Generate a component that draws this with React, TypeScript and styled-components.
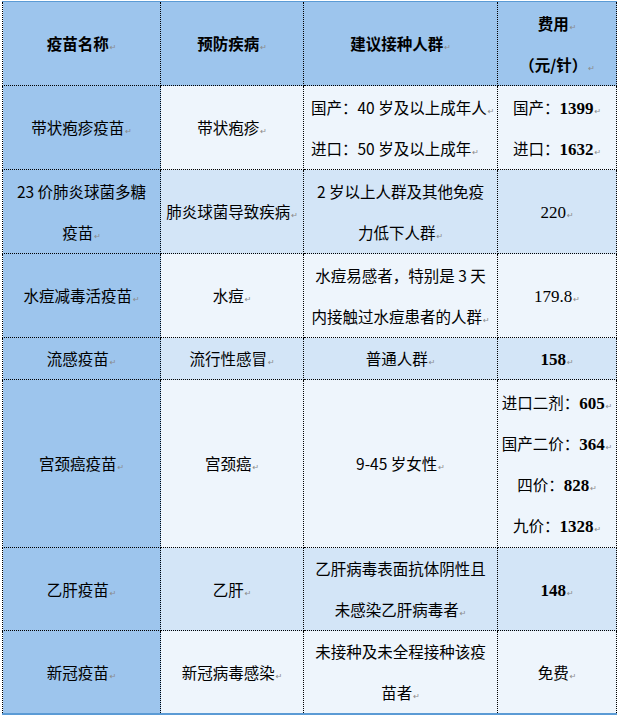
import React from "react";
import styled, { createGlobalStyle } from "styled-components";

const GlobalStyle = createGlobalStyle`
  html, body {
    margin: 0;
    padding: 0;
    background: #ffffff;
  }
  body {
    font-family: "Noto Sans CJK SC", "Liberation Sans", sans-serif;
  }
`;

const Page = styled.div`
  width: 617px;
  height: 715px;
  padding: 1px 0 0 2px;
  box-sizing: border-box;
  overflow: hidden;
`;

const Table = styled.table`
  width: 614px;
  border-collapse: collapse;
  table-layout: fixed;
  border-top: 1px solid #5b9bd5;
  border-bottom: 2px solid #5b9bd5;
`;

const Row = styled.tr<{ $h: number }>`
  height: ${(p) => p.$h}px;
`;

type Tone = "dark" | "mid" | "light";

const toneColor: Record<Tone, string> = {
  dark: "#9dc5ed",
  mid: "#d3e5f7",
  light: "#eef5fc",
};

const Cell = styled.td<{ $tone: Tone; $align?: "left" | "center" }>`
  background: ${(p) => toneColor[p.$tone]};
  border: 1px dotted #000000;
  padding: ${(p) => (p.$align === "left" ? "0 0 0 7px" : "0 1px")};
  text-align: ${(p) => p.$align || "center"};
  vertical-align: middle;
  color: #000000;
  font-size: 15.5px;
  overflow: visible;
`;

const HeadCell = styled(Cell)`
  font-weight: bold;
  border-top: none;
`;

const Line = styled.div`
  height: 41px;
  line-height: 41px;
  white-space: nowrap;
`;

const Mark = styled.span`
  font-family: "DejaVu Sans", sans-serif;
  font-size: 8px;
  line-height: 1;
  font-weight: normal;
  color: #8a8a8a;
  margin-left: 1px;
`;

const Num = styled.span<{ $bold?: boolean }>`
  font-family: "Liberation Serif", serif;
  font-size: 17px;
  line-height: 1;
  font-weight: ${(p) => (p.$bold ? "bold" : "normal")};
`;

type Price = { label?: string; num: string; bold?: boolean };

interface VaccineRow {
  h: number;
  name: string[];
  disease: string[];
  group: string[];
  groupAlign?: "left" | "center";
  price: Price[];
}

const rows: VaccineRow[] = [
  {
    h: 84,
    name: ["带状疱疹疫苗"],
    disease: ["带状疱疹"],
    group: ["国产：40 岁及以上成年人", "进口：50 岁及以上成年"],
    groupAlign: "left",
    price: [
      { label: "国产：", num: "1399", bold: true },
      { label: "进口：", num: "1632", bold: true },
    ],
  },
  {
    h: 84,
    name: ["23 价肺炎球菌多糖", "疫苗"],
    disease: ["肺炎球菌导致疾病"],
    group: ["2 岁以上人群及其他免疫", "力低下人群"],
    price: [{ num: "220" }],
  },
  {
    h: 84,
    name: ["水痘减毒活疫苗"],
    disease: ["水痘"],
    group: ["水痘易感者，特别是 3 天", "内接触过水痘患者的人群"],
    price: [{ num: "179.8" }],
  },
  {
    h: 42,
    name: ["流感疫苗"],
    disease: ["流行性感冒"],
    group: ["普通人群"],
    price: [{ num: "158", bold: true }],
  },
  {
    h: 168,
    name: ["宫颈癌疫苗"],
    disease: ["宫颈癌"],
    group: ["9-45 岁女性"],
    price: [
      { label: "进口二剂：", num: "605", bold: true },
      { label: "国产二价：", num: "364", bold: true },
      { label: "四价：", num: "828", bold: true },
      { label: "九价：", num: "1328", bold: true },
    ],
  },
  {
    h: 83,
    name: ["乙肝疫苗"],
    disease: ["乙肝"],
    group: ["乙肝病毒表面抗体阴性且", "未感染乙肝病毒者"],
    price: [{ num: "148", bold: true }],
  },
  {
    h: 83,
    name: ["新冠疫苗"],
    disease: ["新冠病毒感染"],
    group: ["未接种及未全程接种该疫", "苗者"],
    price: [{ label: "免费", num: "" }],
  },
];

// each paragraph ends with Word's pilcrow-like return mark
const Paragraphs: React.FC<{ lines: string[]; markEach?: boolean }> = ({
  lines,
  markEach,
}) => (
  <>
    {lines.map((text, i) => (
      <Line key={i}>
        {text}
        {(markEach || i === lines.length - 1) && <Mark>↵</Mark>}
      </Line>
    ))}
  </>
);

const PriceLines: React.FC<{ items: Price[] }> = ({ items }) => (
  <>
    {items.map((p, i) => (
      <Line key={i}>
        {p.label}
        {p.num && <Num $bold={p.bold}>{p.num}</Num>}
        <Mark>↵</Mark>
      </Line>
    ))}
  </>
);

const App: React.FC = () => {
  return (
    <Page>
      <GlobalStyle />
      <Table>
        <colgroup>
          <col style={{ width: 158 }} />
          <col style={{ width: 143 }} />
          <col style={{ width: 194 }} />
          <col style={{ width: 119 }} />
        </colgroup>
        <tbody>
          <Row $h={84}>
            <HeadCell $tone="dark">
              <Paragraphs lines={["疫苗名称"]} />
            </HeadCell>
            <HeadCell $tone="dark">
              <Paragraphs lines={["预防疾病"]} />
            </HeadCell>
            <HeadCell $tone="dark">
              <Paragraphs lines={["建议接种人群"]} />
            </HeadCell>
            <HeadCell $tone="dark">
              <Paragraphs lines={["费用", "（元/针）"]} markEach />
            </HeadCell>
          </Row>
          {rows.map((r, i) => {
            const tone: Tone = i % 2 === 0 ? "light" : "mid";
            return (
              <Row key={i} $h={r.h}>
                <Cell $tone="dark">
                  <Paragraphs lines={r.name} />
                </Cell>
                <Cell $tone={tone}>
                  <Paragraphs lines={r.disease} />
                </Cell>
                <Cell $tone={tone} $align={r.groupAlign}>
                  <Paragraphs
                    lines={r.group}
                    markEach={r.groupAlign === "left"}
                  />
                </Cell>
                <Cell $tone={tone}>
                  <PriceLines items={r.price} />
                </Cell>
              </Row>
            );
          })}
        </tbody>
      </Table>
    </Page>
  );
};

export default App;
